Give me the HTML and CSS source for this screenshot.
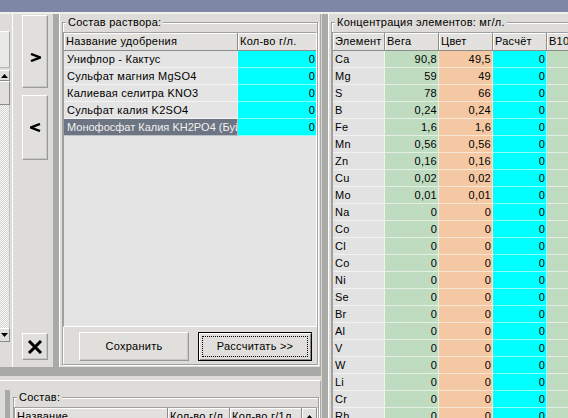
FILE: index.html
```html
<!DOCTYPE html>
<html>
<head>
<meta charset="utf-8">
<link rel="stylesheet" href="styles.css">
</head>
<body>
<div class="titlebar"></div>
<div class="frame">
  <div class="leftcol">
    <div class="top">
      <div class="lst">
        <div class="lst-gap"></div>
        <div class="lst-box"></div>
        <div class="sb-btn"><svg width="7" height="4" viewBox="0 0 7 4"><path d="M3.5 0L7 4H0z"/></svg></div>
        <div class="sb-thumb"></div>
        <div class="sb-track"></div>
        <div class="sb-btn down"><svg width="7" height="4" viewBox="0 0 7 4"><path d="M0 0H7L3.5 4z"/></svg></div>
      </div>
      <div class="btnpanel">
        <button class="tool fwd"><svg width="11" height="9" viewBox="0 0 11 9"><path d="M1 1L10 4.5L1 8" fill="none" stroke="#000" stroke-width="2.4"/></svg></button>
        <button class="tool back"><svg width="11" height="9" viewBox="0 0 11 9"><path d="M10 1L1 4.5L10 8" fill="none" stroke="#000" stroke-width="2.4"/></svg></button>
        <button class="tool del"><svg width="16" height="14" viewBox="0 0 16 14"><path d="M2 1L14 13M14 1L2 13" stroke="#000" stroke-width="3"/></svg></button>
      </div>
      <div class="vsplit"></div>
      <div class="midpanel">
        <fieldset class="group">
          <legend>Состав раствора:</legend>
          <div class="grid mix">
            <div class="cell hd">Название удобрения</div>
            <div class="cell hd">Кол-во г/л.</div>
            <div class="cell name">Унифлор - Кактус</div>
            <div class="cell num aqua">0</div>
            <div class="cell name">Сульфат магния MgSO4</div>
            <div class="cell num aqua">0</div>
            <div class="cell name">Калиевая селитра KNO3</div>
            <div class="cell num aqua">0</div>
            <div class="cell name">Сульфат калия K2SO4</div>
            <div class="cell num aqua">0</div>
            <div class="cell name sel">Монофосфат Калия KH2PO4 (Буйские удобрения)</div>
            <div class="cell num aqua">0</div>
          </div>
          <div class="actions">
            <button class="btn">Сохранить</button>
            <button class="btn default"><span>Рассчитать &gt;&gt;</span></button>
          </div>
        </fieldset>
      </div>
    </div>
    <div class="hsplit"></div>
    <div class="bottom">
      <div class="bpanel">
        <div class="bbar"></div>
        <fieldset class="group bgroup">
          <legend>Состав:</legend>
          <div class="grid comp">
            <div class="cell hd">Название</div>
            <div class="cell hd">Кол-во г/л</div>
            <div class="cell hd">Кол-во г/1л</div>
            <div class="cell hd sbu"><svg width="7" height="4" viewBox="0 0 7 4"><path d="M3.5 0L7 4H0z"/></svg></div>
          </div>
        </fieldset>
      </div>
    </div>
  </div>
  <div class="rsplit"></div>
  <div class="right">
    <fieldset class="group rgroup">
      <legend>Концентрация элементов: мг/л.</legend>
      <div class="grid conc">
        <div class="cell hd">Элемент</div><div class="cell hd">Вега</div><div class="cell hd">Цвет</div><div class="cell hd">Расчёт</div><div class="cell hd">B10</div>
        <div class="cell el">Ca</div><div class="cell num g">90,8</div><div class="cell num p">49,5</div><div class="cell num aqua">0</div><div class="cell g"></div>
        <div class="cell el">Mg</div><div class="cell num g">59</div><div class="cell num p">49</div><div class="cell num aqua">0</div><div class="cell g"></div>
        <div class="cell el">S</div><div class="cell num g">78</div><div class="cell num p">66</div><div class="cell num aqua">0</div><div class="cell g"></div>
        <div class="cell el">B</div><div class="cell num g">0,24</div><div class="cell num p">0,24</div><div class="cell num aqua">0</div><div class="cell g"></div>
        <div class="cell el">Fe</div><div class="cell num g">1,6</div><div class="cell num p">1,6</div><div class="cell num aqua">0</div><div class="cell g"></div>
        <div class="cell el">Mn</div><div class="cell num g">0,56</div><div class="cell num p">0,56</div><div class="cell num aqua">0</div><div class="cell g"></div>
        <div class="cell el">Zn</div><div class="cell num g">0,16</div><div class="cell num p">0,16</div><div class="cell num aqua">0</div><div class="cell g"></div>
        <div class="cell el">Cu</div><div class="cell num g">0,02</div><div class="cell num p">0,02</div><div class="cell num aqua">0</div><div class="cell g"></div>
        <div class="cell el">Mo</div><div class="cell num g">0,01</div><div class="cell num p">0,01</div><div class="cell num aqua">0</div><div class="cell g"></div>
        <div class="cell el">Na</div><div class="cell num g">0</div><div class="cell num p">0</div><div class="cell num aqua">0</div><div class="cell g"></div>
        <div class="cell el">Co</div><div class="cell num g">0</div><div class="cell num p">0</div><div class="cell num aqua">0</div><div class="cell g"></div>
        <div class="cell el">Cl</div><div class="cell num g">0</div><div class="cell num p">0</div><div class="cell num aqua">0</div><div class="cell g"></div>
        <div class="cell el">Co</div><div class="cell num g">0</div><div class="cell num p">0</div><div class="cell num aqua">0</div><div class="cell g"></div>
        <div class="cell el">Ni</div><div class="cell num g">0</div><div class="cell num p">0</div><div class="cell num aqua">0</div><div class="cell g"></div>
        <div class="cell el">Se</div><div class="cell num g">0</div><div class="cell num p">0</div><div class="cell num aqua">0</div><div class="cell g"></div>
        <div class="cell el">Br</div><div class="cell num g">0</div><div class="cell num p">0</div><div class="cell num aqua">0</div><div class="cell g"></div>
        <div class="cell el">Al</div><div class="cell num g">0</div><div class="cell num p">0</div><div class="cell num aqua">0</div><div class="cell g"></div>
        <div class="cell el">V</div><div class="cell num g">0</div><div class="cell num p">0</div><div class="cell num aqua">0</div><div class="cell g"></div>
        <div class="cell el">W</div><div class="cell num g">0</div><div class="cell num p">0</div><div class="cell num aqua">0</div><div class="cell g"></div>
        <div class="cell el">Li</div><div class="cell num g">0</div><div class="cell num p">0</div><div class="cell num aqua">0</div><div class="cell g"></div>
        <div class="cell el">Cr</div><div class="cell num g">0</div><div class="cell num p">0</div><div class="cell num aqua">0</div><div class="cell g"></div>
        <div class="cell el">Rh</div><div class="cell num g">0</div><div class="cell num p">0</div><div class="cell num aqua">0</div><div class="cell g"></div>
      </div>
    </fieldset>
  </div>
</div>
</body>
</html>
```

FILE: styles.css
```css
* { box-sizing: border-box; }
html, body { margin: 0; padding: 0; }
body {
  width: 568px;
  height: 418px;
  overflow: hidden;
  background: #dedcd8;
  color: #000;
  font: 11px/13px "Liberation Sans", Arial, sans-serif;
  letter-spacing: 0.25px;
}
.titlebar { height: 12px; background: #7e88a6; }
.frame { display: flex; height: 406px; border-top: 2px solid #efefec; }
.leftcol { width: 321px; flex: none; display: flex; flex-direction: column; }
.top { height: 353px; flex: none; display: flex; }

/* cut-off list on the far left */
.lst { width: 12px; flex: none; display: flex; flex-direction: column; }
.lst > * { width: 10px; flex: none; }
.lst-gap { height: 17px; }
.lst-box {
  height: 37px; margin-bottom: 2px; background: #e8e8e6;
  border-top: 1px solid #fff; border-right: 1px solid #a8a8a8; border-bottom: 1px solid #b4b4b4;
}
.sb-btn {
  height: 11px; display: flex; align-items: center; justify-content: center;
  background: #e0dfdb; border: 1px solid; border-left: none;
  border-color: #fff #8c8c8c #8c8c8c #fff;
}
.sb-btn.down { height: 14px; }
.sb-thumb {
  height: 24px; background: #e0dfdb; border: 1px solid; border-left: none;
  border-color: #fff #8c8c8c #8c8c8c #fff;
}
.sb-track {
  height: 223px;
  background: repeating-conic-gradient(#fbfbfb 0 25%, #d2d0ca 0 50%) 0 0 / 2px 2px;
  border-right: 1px solid #c4c4c0;
}

/* vertical tool buttons */
.btnpanel {
  width: 41px; flex: none; border-left: 1px solid #fff;
  padding: 1px 0 7px 9px; display: flex; flex-direction: column;
}
.tool {
  appearance: none; margin: 0; padding: 0; width: 26px; flex: none;
  background: #e0dfdb; border: 1px solid; border-color: #fff #9a9a9a #9a9a9a #fff;
  box-shadow: inset -1px -1px 0 #c8c8c4;
  display: flex; align-items: center; justify-content: center;
}
.tool.fwd { height: 73px; padding-top: 11px; }
.tool.back { height: 65px; margin-top: 7px; }
.tool.del { height: 27px; margin-top: auto; }

.vsplit { width: 6px; flex: none; background: #a9a9a5; }
.hsplit { height: 9px; flex: none; background: #a9a9a5; }
.rsplit { width: 7px; flex: none; background: #a9a9a5; border-left: 1px solid #d6d6d2; }

.midpanel {
  width: 262px; flex: none; border-left: 1px solid #fff; border-right: 1px solid #a8a8a8;
  padding-top: 2px;
}

/* group boxes */
.group {
  min-width: 0; margin: 0 2px 0 2px; padding: 0;
  border: 1px solid #a0a0a0;
  box-shadow: inset 1px 1px 0 #fff, 1px 1px 0 #fff;
}
.group legend { margin-left: 3px; padding: 0 2px; line-height: 13px; background: #dedcd8; }
.midpanel .group { padding-bottom: 3px; }

/* grids */
.grid {
  display: grid; align-content: start; margin-top: 3px;
  border: 1px solid; border-color: #a0a0a0 #fff #fff #a0a0a0;
  background: #e4e4e4;
}
.cell {
  height: 17px; line-height: 16px; padding: 0 2px;
  white-space: nowrap; overflow: hidden;
  border-right: 1px solid rgba(255,255,255,.55);
  border-bottom: 1px solid rgba(255,255,255,.55);
}
.hd {
  height: 18px; line-height: 17px; background: #e2e1de;
  border-right-color: #8c8c8c; border-bottom-color: #8c8c8c;
  box-shadow: inset 1px 1px 0 #fff;
}
.num { text-align: right; padding-right: 1px; }
.name { padding-left: 3px; }
.sel { background: #6d7482; color: #f2f2f2; letter-spacing: 0; }
.aqua { background: #00ffff; }
.g { background: #c0dcc0; }
.p { background: #f4c8a2; }
.el { background: #e2e2e2; }

.mix { height: 295px; grid-template-columns: 174px 78px; }
.mix .cell:nth-child(2n) { border-right: none; }

.actions { display: flex; gap: 9px; padding-left: 16px; margin-top: 5px; }
.btn {
  appearance: none; margin: 0; width: 110px; height: 29px; padding: 0;
  font: inherit; letter-spacing: inherit; color: #000; background: #e0dfdb;
  border: 1px solid; border-color: #fff #9a9a9a #9a9a9a #fff;
  box-shadow: inset -1px -1px 0 #c8c8c4;
}
.btn.default {
  width: 114px; padding: 3px; border: 1px solid #000;
  box-shadow: inset 1px 1px 0 #fff, inset -1px -1px 0 #8c8c8c;
}
.btn.default span {
  display: flex; height: 100%; align-items: center; justify-content: center;
  border: 1px dotted #000;
}

/* bottom panel */
.bottom { flex: 1; padding-top: 4px; }
.bpanel { height: 100%; display: flex; border-top: 1px solid #fff; border-right: 1px solid #a8a8a8; }
.bbar { width: 5px; flex: none; margin: 9px 0 0 5px; background: #a9a9a5; }
.bgroup { flex: 1; margin: 10px 1px 0 3px; }
.comp { grid-template-columns: 153px 62px 72px 1fr; }
.sbu { display: flex; align-items: center; justify-content: center; padding: 0; }

/* right panel */
.right { flex: 1; min-width: 0; overflow: hidden; border-left: 1px solid #fff; padding-top: 2px; }
.rgroup { width: 330px; }
.conc { grid-template-columns: 52px 54px 54px 54px 54px; }
```
